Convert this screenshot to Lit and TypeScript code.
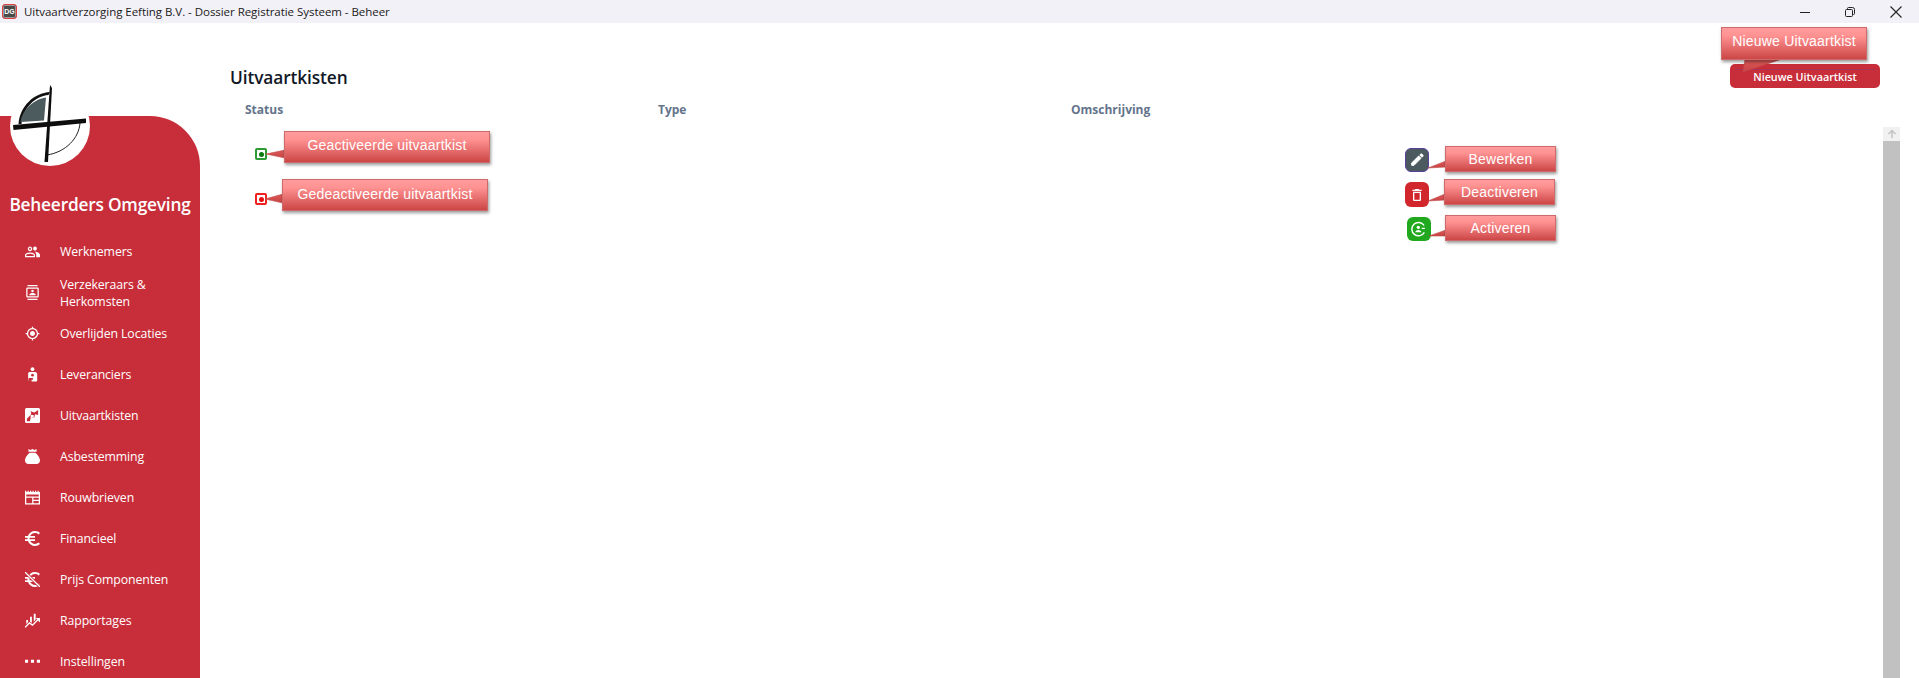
import { LitElement, html, css, svg } from "lit";
import { customElement } from "lit/decorators.js";

const RED = "#c82e3a";
const mi = (d: string) => svg`<path d=${d} fill="currentColor"/>`;
const euro = "M15 18.500c-2.510 0-4.680-1.420-5.760-3.500H15v-2H8.580c-.050-.330-.080-.660-.080-1s.030-.670.080-1H15V9H9.240C10.320 6.920 12.500 5.500 15 5.500c1.610 0 3.090.590 4.230 1.570L21 5.300C19.410 3.870 17.300 3 15 3c-3.920 0-7.240 2.510-8.480 6H3v2h3.060c-.040.330-.060.660-.060 1s.020.670.060 1H3v2h3.520c1.240 3.490 4.560 6 8.480 6 2.310 0 4.410-.870 6-2.300l-1.780-1.770c-1.130.980-2.600 1.570-4.220 1.570z";
const full = "0 0 24 24";
const tight = "3 3 18 18";
const menu = [
  { label: "Werknemers", vb: full, icon: mi("M16 10.500c1.660 0 3-1.340 3-3.250S17.660 4 16 4s-3 1.340-3 3.250 1.340 3.250 3 3.250zm-8 1c1.900 0 3.500-1.600 3.500-3.750S9.900 4 8 4 4.500 5.600 4.500 7.750 6.100 11.500 8 11.500zm0-5.500c1 0 1.500.800 1.500 1.750S9 9.500 8 9.500 6.500 8.700 6.500 7.750 7 6 8 6zm0 7.500c-2.500 0-8 1.300-8 4V21h16v-3.500c0-2.700-5.500-4-8-4zM2 19v-1.500c0-.800 3.600-2 6-2s6 1.200 6 2V19zm14.500-6.500c-.300 0-.600 0-1 .050 1.500 1.100 2.500 2.700 2.500 4.950V21h6v-3.500c0-2.800-5-5-7.500-5z") },
  { label: "Verzekeraars & Herkomsten", vb: full, icon: mi("M20 0H4v2h16V0zM4 24h16v-2H4v2zM20 4H4c-1.100 0-2 .900-2 2v12c0 1.100.900 2 2 2h16c1.100 0 2-.900 2-2V6c0-1.100-.900-2-2-2zm0 14H4V6h16v12zM12 7.500a2 2 0 110 4 2 2 0 010-4zM17 16.500H7v-1.200c0-1.600 3.300-2.400 5-2.400s5 .800 5 2.400v1.200z") },
  { label: "Overlijden Locaties", vb: full, icon: mi("M12 8c-2.210 0-4 1.790-4 4s1.790 4 4 4 4-1.790 4-4-1.790-4-4-4zm8.940 3c-.460-4.170-3.770-7.480-7.940-7.940V1h-2v2.060C6.830 3.520 3.520 6.830 3.060 11H1v2h2.060c.460 4.170 3.770 7.480 7.940 7.940V23h2v-2.060c4.170-.460 7.480-3.770 7.940-7.940H23v-2h-2.060zM12 19c-3.870 0-7-3.130-7-7s3.130-7 7-7 7 3.130 7 7-3.130 7-7 7z") },
  { label: "Leveranciers", vb: full, icon: svg`<circle cx="12" cy="3.500" r="3" fill="currentColor"/><path d="M8 8h8c2.500 0 3.500 2 3.500 4v9.500c0 1-.800 1.500-1.500 1.500h-7.500v-2.500h1c1 0 1.500-.800 1.500-1.500s-.700-1.500-1.500-1.500H7c-1 0-1.500 1-1.500 2v3H5V11c0-2 1.200-3 3-3z" fill="currentColor"/><circle cx="12" cy="13" r="2.200" fill="${RED}"/>` },
  { label: "Uitvaartkisten", vb: full, icon: svg`<rect x="0" y="0" width="24" height="24" rx="2.500" fill="currentColor"/><path d="M21 3v8l-5-1-1 5-6 1-1 5H3v-4l7-7-1-5 6 2z" fill="${RED}"/><path d="M9 11l5 0 0 4-5 1z" fill="currentColor"/>` },
  { label: "Asbestemming", vb: full, icon: mi("M5.500 0l3 1.500L12 0l3.500 1.500L18.500 0v4.500h-13zM7.500 6h9c3.500 2.500 7.500 8 7.500 12.500 0 3.500-2.500 5.500-5.500 5.500h-13C2.500 24 0 22 0 18.500 0 14 4 8.500 7.500 6z") },
  { label: "Rouwbrieven", vb: full, icon: mi("M0 1h2v2h2V1h2v2h2V1h2v2h2V1h2v2h2V1h2v2h2V1h2v2h2V1h0v0H24v22H0V1zm2 6v3.500h20V7zm0 5.500V21h9.500v-8.500zm11.500 0v3h8.500v-3zm0 5V21h8.500v-3.500z") },
  { label: "Financieel", vb: tight, icon: mi(euro) },
  { label: "Prijs Componenten", vb: tight, icon: svg`${mi(euro)}<path d="M3 3l18 18" stroke="${RED}" stroke-width="3.500"/><path d="M3 3l18 18" stroke="currentColor" stroke-width="1.500"/>` },
  { label: "Rapportages", vb: full, icon: svg`<path d="M2 11h3v10H2zM8 6h3v12H8zM14 1h3v13h-3z" fill="currentColor"/><path d="M0 23l7-7 5 3.500 9-9" fill="none" stroke="${RED}" stroke-width="5"/><path d="M0 23l7-7 5 3.500 9-9" fill="none" stroke="currentColor" stroke-width="2.200"/><path d="M17 8h7v7z" fill="currentColor"/>` },
  { label: "Instellingen", vb: full, icon: mi("M0 9h5v5H0zM9.500 9h5v5h-5zM19 9h5v5h-5z") },
];

const callouts = [
  { text: "Nieuwe Uitvaartkist", x: 1721, y: 27, w: 146, h: 33, pb: 5, tail: "1745,59 1743,72 1782,59" },
  { text: "Geactiveerde uitvaartkist", x: 284, y: 131, w: 206, h: 32, pb: 4, tail: "285,150 266,154 285,158" },
  { text: "Gedeactiveerde uitvaartkist", x: 282, y: 179, w: 206, h: 32, pb: 3, tail: "283,194 265,199 283,203" },
  { text: "Bewerken", x: 1445, y: 146, w: 111, h: 26, pb: 0, tail: "1446,161 1428,168 1446,167" },
  { text: "Deactiveren", x: 1444, y: 179, w: 111, h: 26, pb: 0, tail: "1445,194 1428,201 1445,200" },
  { text: "Activeren", x: 1445, y: 215, w: 111, h: 26, pb: 1, tail: "1446,230 1429,236 1446,236" },
];

@customElement("app-root")
export class AppRoot extends LitElement {
  static styles = css`
    :host { display: block; position: relative; width: 1919px; height: 678px; overflow: hidden; background: #fff; font-family: "Open Sans", "Noto Sans", sans-serif; }
    .titlebar { height: 23px; background: #f3f1f8; display: flex; align-items: center; padding-left: 2px; box-sizing: border-box; }
    .appicon { width: 15px; height: 15px; box-sizing: border-box; border: 1px solid #e04040; border-radius: 3px; background: #4a4a4a; color: #fff; font: bold 7px "Liberation Sans", sans-serif; display: flex; align-items: center; justify-content: center; box-shadow: inset 0 0 0 1px #999; margin-right: 7px; margin-top: -1px; }
    .wintitle { font-size: 11.500px; color: #1a1a1a; flex: 1; white-space: nowrap; letter-spacing: -0.04px; }
    .winbtn { display: flex; align-items: center; gap: 35px; padding-right: 17px; color: #222; }
    .winbtn svg { display: block; }
    .body { display: flex; height: 655px; }
    .sidebar { width: 200px; margin-top: 93px; background: #c82e3a; border-top-right-radius: 50px; position: relative; color: #fff; display: flex; flex-direction: column; flex: none; }
    .logo { position: absolute; left: 0; top: -36px; }
    .sidetitle { margin-top: 74px; text-align: center; font-size: 17.300px; font-weight: 600; height: 30px; line-height: 30px; white-space: nowrap; letter-spacing: -0.2px; }
    .nav { margin-top: 11px; display: flex; flex-direction: column; }
    .item { height: 41px; display: flex; align-items: center; padding-left: 25px; font-size: 12.300px; line-height: 17px; flex: none; }
    .item svg { width: 15px; height: 15px; flex: none; margin-right: 20px; }
    .item span { width: 110px; letter-spacing: -0.1px; }
    .main { flex: 1; padding: 32px 19px 0 30px; display: flex; flex-direction: column; min-width: 0; }
    .head { display: flex; justify-content: space-between; }
    h1 { margin: 10px 0 0; font-size: 17.300px; font-weight: 600; line-height: 26px; color: #111827; letter-spacing: -0.1px; }
    .new { margin: 9px 20px 0 0; width: 150px; height: 24px; border: none; border-radius: 5px; background: #c82e3a; color: #fff; font: 600 10.800px "Open Sans", sans-serif; padding: 0; position: relative; }
    .new::before { content: ""; position: absolute; left: 5px; right: 5px; top: 5px; height: 1px; background: rgba(110, 60, 150, .35); }
    .cols { display: grid; grid-template-columns: 413px 413px 1fr; padding-left: 15px; height: 20px; align-items: center; font-size: 12px; font-weight: 700; color: #64748b; margin-top: 8px; }
    .tablebody { flex: 1; display: flex; margin-top: 8px; }
    .legend { flex: 1; display: flex; padding: 21px 0 0 25px; }
    .status { display: flex; flex-direction: column; gap: 33px; width: 1150px; flex: none; }
    .dot { width: 12px; height: 12px; box-sizing: border-box; border: 2px solid; border-radius: 2px; display: flex; align-items: center; justify-content: center; background: #fff; }
    .dot i { width: 5px; height: 5px; border-radius: 50%; background: currentColor; }
    .dot.on { border-color: #2d9a34; color: #0a7a10; }
    .dot.off { border-color: #f02020; color: #e80e0e; }
    .actions { display: flex; flex-direction: column; gap: 10px; }
    .act { width: 24px; height: 24px; box-sizing: border-box; border-radius: 6px; display: flex; align-items: center; justify-content: center; color: #fff; }
    .act svg { width: 16px; height: 16px; }
    .act.edit { background: #4a5a5e; border: 1px solid #5b3f9a; }
    .act.del { background: #d0262c; height: 25px; }
    .act.go { background: #20a81e; margin-left: 2px; }
    .scroll { width: 17px; background: #c1c1c1; flex: none; display: flex; flex-direction: column; }
    .scroll .up { height: 14px; background: #f1f1f1; display: flex; align-items: center; justify-content: center; color: #c4c4c4; }
    .callout { position: absolute; box-sizing: border-box; border: 1px solid #cf6a6a; background: linear-gradient(#ff9c9c, #ff9292 25%, #cc4646); color: #fff; font: 14px "Liberation Sans", sans-serif; letter-spacing: .2px; display: flex; align-items: center; justify-content: center; box-shadow: 1px 2px 3px rgba(0,0,0,.4); white-space: nowrap; }
    .tails { position: absolute; left: 0; top: 0; width: 1919px; height: 678px; pointer-events: none; }
  `;

  render() {
    return html`
      <div class="titlebar">
        <div class="appicon">DG</div>
        <div class="wintitle">Uitvaartverzorging Eefting B.V. - Dossier Registratie Systeem - Beheer</div>
        <div class="winbtn">
          <svg width="10" height="10" viewBox="0 0 10 10"><path d="M0 5.500h10" stroke="currentColor" stroke-width="1"/></svg>
          <svg width="10" height="10" viewBox="0 0 10 10" fill="none" stroke="currentColor"><rect x=".5" y="2.500" width="7" height="7" rx="1"/><path d="M2.500 2.500V1.500q0-1 1-1h4q2 0 2 2v4q0 1-1 1h-1"/></svg>
          <svg width="12" height="12" viewBox="0 0 12 12"><path d="M.5.5l11 11M11.500.5l-11 11" stroke="currentColor" stroke-width="1.100"/></svg>
        </div>
      </div>
      <div class="body">
        <aside class="sidebar">
          <svg class="logo" width="100" height="90" viewBox="0 0 100 90">
            <circle cx="50" cy="46" r="40" fill="#fff"/>
            <path d="M18.500 44C20 26 34 13 50 12L48.500 15C35 16 23 28 21.500 44z" fill="#111"/>
            <path d="M20.500 42C22 30 34 19 46 17.500L44 40.500z" fill="#4c5c5e"/>
            <path d="M80 43C79 58 66 72 47 75" fill="none" stroke="#222" stroke-width="1"/>
            <path d="M13 45L86 38.500 86 43 13.500 50z" fill="#0d0d0d"/>
            <path d="M50 5L52 8 48 82 44.500 82z" fill="#0d0d0d"/>
          </svg>
          <div class="sidetitle">Beheerders Omgeving</div>
          <nav class="nav">
            ${menu.map((m) => html`<div class="item"><svg viewBox=${m.vb}>${m.icon}</svg><span>${m.label}</span></div>`)}
          </nav>
        </aside>
        <main class="main">
          <div class="head">
            <h1>Uitvaartkisten</h1>
            <button class="new">Nieuwe Uitvaartkist</button>
          </div>
          <div class="cols"><div>Status</div><div>Type</div><div>Omschrijving</div></div>
          <div class="tablebody">
            <div class="legend">
              <div class="status">
                <div class="dot on"><i></i></div>
                <div class="dot off"><i></i></div>
              </div>
              <div class="actions">
                <div class="act edit"><svg viewBox="0 0 24 24"><path fill="currentColor" stroke="currentColor" stroke-width="1.500" stroke-linejoin="round" d="M4 16.500V20h3.500L18 9.500 14.500 6z"/><path fill="currentColor" d="M15.500 4.500l2-2a1.400 1.400 0 012 0l2 2a1.400 1.400 0 010 2l-2 2z"/></svg></div>
                <div class="act del"><svg viewBox="0 0 24 24"><path fill="currentColor" d="M6 19c0 1.100.9 2 2 2h8c1.100 0 2-.9 2-2V7H6v12zM8 9h8v10H8V9zm7.500-5l-1-1h-5l-1 1H5v2h14V4h-3.500z"/></svg></div>
                <div class="act go"><svg viewBox="0 0 24 24"><path fill="none" stroke="currentColor" stroke-width="2.200" d="M19.500 6.500A10 10 0 1020 17"/><circle cx="11" cy="9.500" r="2.500" fill="currentColor"/><path fill="currentColor" d="M6.500 17c0-2.500 2.500-3.500 4.500-3.500s4.500 1 4.500 3.500zM16 10h5v2h-5z"/></svg></div>
              </div>
            </div>
            <div class="scroll">
              <div class="up"><svg width="10" height="10" viewBox="0 0 10 10"><path d="M5 9V2M1.500 5L5 1.500 8.500 5" fill="none" stroke="currentColor" stroke-width="1.500"/></svg></div>
            </div>
          </div>
        </main>
      </div>
      <svg class="tails" viewBox="0 0 1919 678">
        <defs><linearGradient id="tg" x1="0" y1="0" x2="0" y2="1"><stop offset="0" stop-color="#dd5a5a"/><stop offset="1" stop-color="#c84444"/></linearGradient></defs>
        ${callouts.map((c) => svg`<polygon points=${c.tail} fill="url(#tg)" stroke="#c04a4a" stroke-width=".6"/>`)}
      </svg>
      ${callouts.map((c) => html`<div class="callout" style="left:${c.x}px;top:${c.y}px;width:${c.w}px;height:${c.h}px;padding-bottom:${c.pb}px">${c.text}</div>`)}
    `;
  }
}
